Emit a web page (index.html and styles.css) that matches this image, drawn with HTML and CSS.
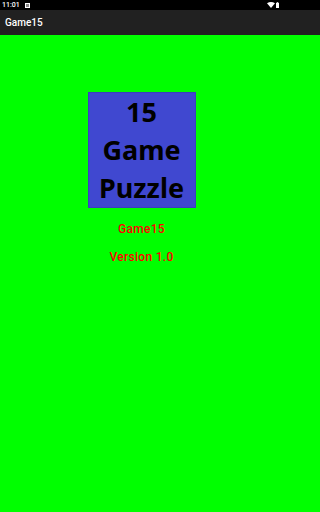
FILE: index.html
```html
<!DOCTYPE html>
<html>
<head>
<meta charset="utf-8">
<link rel="stylesheet" href="styles.css">
</head>
<body>
<div class="status">
  <div class="status-left">
    <span class="time">11:01</span>
    <span class="notif"></span>
  </div>
  <div class="status-right">
    <svg class="wifi" width="8" height="6" viewBox="0 0 8 6"><path d="M0 1.2 Q4 -1.2 8 1.2 L4 6 Z" fill="#fff"/></svg>
    <svg class="battery" width="3" height="6" viewBox="0 0 3 6"><rect x="0.9" y="0" width="1.2" height="0.8" fill="#fff"/><rect x="0" y="0.8" width="3" height="5.2" fill="#fff"/></svg>
  </div>
</div>
<div class="appbar">Game15</div>
<main class="content">
  <div class="logo">15<br>Game<br>Puzzle</div>
  <div class="label first">Game15</div>
  <div class="label second">Version 1.0</div>
</main>
</body>
</html>
```
FILE: styles.css
```css
html, body {
  margin: 0;
  padding: 0;
  height: 100%;
}
html {
  background: linear-gradient(#000 0, #000 10px, #212121 10px, #212121 35px, #00ff00 35px);
}
body {
  width: 283px;
  font-family: Roboto, "Noto Sans", sans-serif;
  display: flex;
  flex-direction: column;
}
.status {
  height: 10px;
  background: #000;
  display: flex;
  align-items: center;
  justify-content: space-between;
  padding: 0 4px 0 2px;
}
.status-left {
  display: flex;
  align-items: center;
  gap: 5px;
}
.time {
  color: #fff;
  font-size: 7px;
  line-height: 10px;
  font-weight: 500;
}
.notif {
  width: 3px;
  height: 3px;
  border: 1px solid #fff;
  background: #888;
}
.status-right {
  display: flex;
  align-items: center;
  gap: 1px;
}
.appbar {
  height: 25px;
  background: #212121;
  color: #fff;
  font-size: 10px;
  font-weight: 500;
  line-height: 25px;
  padding-left: 5px;
}
.content {
  flex: 1;
  display: flex;
  flex-direction: column;
  align-items: center;
  padding-top: 57px;
  background: #00ff00;
}
.logo {
  width: 106px;
  box-sizing: content-box;
  background: #4048d0;
  border: 1px solid #3a3fc0;
  color: #000;
  font-family: "Noto Sans", sans-serif;
  font-weight: 700;
  font-size: 27px;
  line-height: 38px;
  text-align: center;
}
.label {
  color: #ff0000;
  font-size: 12px;
  font-weight: 500;
  letter-spacing: 0.3px;
  line-height: 14px;
}
.first {
  margin-top: 14px;
}
.second {
  margin-top: 14px;
}
```
